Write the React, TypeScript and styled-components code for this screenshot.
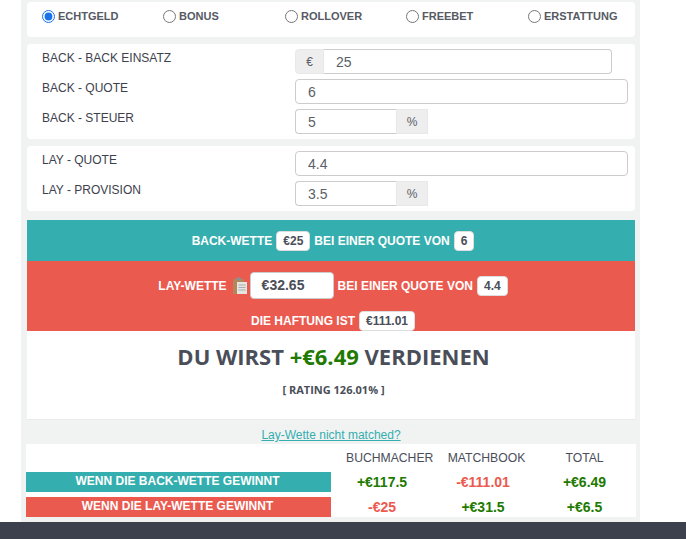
import React from "react";
import styled, { createGlobalStyle } from "styled-components";

const Global = createGlobalStyle`
  html, body { margin: 0; padding: 0; background: #fff; height: 539px; overflow: hidden; }
  #root { height: 539px; }
`;

const Page = styled.div`
  width: 686px;
  height: 539px;
  display: flex;
  flex-direction: column;
  font-family: "Liberation Sans", Arial, sans-serif;
`;

const Panel = styled.main`
  width: 619px;
  height: 522px;
  margin-left: 21px;
  background: #f1f3f3;
  padding: 2px 5px 0 6px;
  box-sizing: border-box;
  display: flex;
  flex-direction: column;
`;

const Footer = styled.footer`
  height: 17px;
  background: #3d414d;
`;

const Card = styled.section<{ $mb: number }>`
  background: #fff;
  border-radius: 4px;
  margin-bottom: ${(p) => p.$mb}px;
`;

const RadioRow = styled(Card)`
  height: 35px;
  box-sizing: border-box;
  padding: 8px 0 0 15px;
  display: grid;
  grid-template-columns: 121px 122px 121px 122px auto;
  align-content: start;
`;

const RadioItem = styled.label`
  display: flex;
  align-items: center;
  gap: 3px;
  font-size: 11px;
  font-weight: 700;
  color: #565a64;
  line-height: 13px;
`;

const RadioInput = styled.input`
  margin: 0;
  width: 13px;
  height: 13px;
  accent-color: #1a73e8;
`;

const FormCard = styled(Card)`
  padding: 5px 0;
  display: flex;
  flex-direction: column;
  gap: 5px;
`;

const Row = styled.div`
  display: grid;
  grid-template-columns: 253px 1fr;
  padding-left: 15px;
  height: 25px;
`;

const Label = styled.div`
  font-size: 12px;
  color: #3d414d;
  line-height: 16px;
  margin-top: 1px;
`;

const Group = styled.div<{ $w: number }>`
  display: flex;
  width: ${(p) => p.$w}px;
  height: 25px;
`;

const Field = styled.input<{ $l?: boolean; $r?: boolean }>`
  flex: 1;
  min-width: 0;
  box-sizing: border-box;
  height: 25px;
  border: 1px solid #ccc;
  border-radius: ${(p) => (p.$l ? "0" : "4px")} ${(p) => (p.$r ? "0 0" : "4px 4px")} ${(p) => (p.$l ? "0" : "4px")};
  ${(p) => (p.$r ? "border-right: 0;" : "")}
  ${(p) => (p.$l ? "border-left: 0;" : "")}
  padding: 0 0 0 12px;
  font-family: "Liberation Sans", Arial, sans-serif;
  font-size: 14px;
  color: #5b5f68;
  background: #fff;
  outline: none;
`;

const Addon = styled.span<{ $w: number; $left?: boolean }>`
  width: ${(p) => p.$w}px;
  box-sizing: border-box;
  display: flex;
  align-items: center;
  justify-content: center;
  background: #eee;
  border: 1px solid #e8e8e8;
  border-radius: ${(p) => (p.$left ? "4px 0 0 4px" : "0")};
  font-size: 12px;
  color: #5b5f68;
`;

const Banner = styled.div<{ $bg: string }>`
  background: ${(p) => p.$bg};
  color: #fff;
  font-size: 12px;
  font-weight: 700;
  display: flex;
  flex-direction: column;
  align-items: center;
  padding-left: 4px;
`;

const Line = styled.div<{ $h: number }>`
  height: ${(p) => p.$h}px;
  display: flex;
  align-items: center;
  justify-content: center;
  gap: 4px;
`;

const Pill = styled.span`
  background: #fff;
  color: #4a4e58;
  font-size: 12px;
  font-weight: 700;
  border: 1px solid #ddd;
  border-radius: 4px;
  padding: 0 6px;
  height: 18px;
  line-height: 18px;
  display: inline-block;
`;

const Amount = styled.span`
  box-sizing: border-box;
  width: 84px;
  height: 27px;
  background: #fff;
  border: 1px solid #ccc;
  border-radius: 4px;
  padding-left: 11px;
  color: #4a4e58;
  font-size: 14px;
  font-weight: 700;
  line-height: 25px;
`;

const Clip = styled.svg`
  width: 16px;
  height: 18px;
  margin-left: 1px;
  margin-right: -2px;
`;

const Result = styled.div`
  background: #fff;
  height: 89px;
  border-bottom: 1px solid #e9ebeb;
  box-sizing: border-box;
  padding-left: 5px;
  text-align: center;
  font-family: "Open Sans", sans-serif;
`;

const Headline = styled.h2`
  margin: 0;
  padding-top: 9px;
  font-size: 22px;
  line-height: 32px;
  font-weight: 700;
  color: #4a4e58;
`;

const Green = styled.span`
  color: #217a00;
`;

const Rating = styled.div`
  margin-top: 11px;
  font-size: 11px;
  line-height: 14px;
  font-weight: 700;
  color: #4a4e58;
`;

const LinkRow = styled.div`
  height: 24px;
  display: flex;
  align-items: center;
  justify-content: center;
  padding-top: 6px;
  box-sizing: border-box;
  font-size: 12px;
`;

const MatchLink = styled.a`
  color: #34aeae;
  text-decoration: underline;
`;

const Table = styled.div`
  margin-left: -1px;
  width: 610px;
  height: 73px;
  background: #fff;
  display: grid;
  grid-template-columns: 305px 102px 100px 103px;
  grid-template-rows: 28px 20px 5px 20px;
  font-size: 12px;
`;

const Head = styled.div<{ $pad?: number }>`
  color: #4a4e58;
  font-size: 12.2px;
  text-align: center;
  line-height: 29px;
  padding-left: ${(p) => p.$pad ?? 0}px;
  white-space: nowrap;
`;

const RowLabel = styled.div<{ $bg: string }>`
  background: ${(p) => p.$bg};
  color: #fff;
  font-weight: 700;
  text-align: center;
  line-height: 18px;
  height: 20px;
  padding-right: 2px;
`;

const Val = styled.div<{ $c: string }>`
  color: ${(p) => p.$c};
  font-size: 14px;
  font-weight: 700;
  text-align: center;
  line-height: 20px;
`;

const Gap = styled.div`
  grid-column: 1 / -1;
`;

const GREEN = "#217a00";
const RED = "#eb5a4f";
const TEAL = "#34aeae";

const radios = ["ECHTGELD", "BONUS", "ROLLOVER", "FREEBET", "ERSTATTUNG"];

export default function App() {
  return (
    <Page>
      <Global />
      <Panel>
        <RadioRow $mb={7}>
          {radios.map((r, i) => (
            <RadioItem key={r}>
              <RadioInput type="radio" name="mode" defaultChecked={i === 0} />
              {r}
            </RadioItem>
          ))}
        </RadioRow>
        <FormCard $mb={7}>
          <Row>
            <Label>BACK - BACK EINSATZ</Label>
            <Group $w={317}>
              <Addon $w={29} $left>€</Addon>
              <Field $l defaultValue="25" />
            </Group>
          </Row>
          <Row>
            <Label>BACK - QUOTE</Label>
            <Group $w={333}>
              <Field defaultValue="6" />
            </Group>
          </Row>
          <Row>
            <Label>BACK - STEUER</Label>
            <Group $w={133}>
              <Field $r defaultValue="5" />
              <Addon $w={32}>%</Addon>
            </Group>
          </Row>
        </FormCard>
        <FormCard $mb={9}>
          <Row>
            <Label>LAY - QUOTE</Label>
            <Group $w={333}>
              <Field defaultValue="4.4" />
            </Group>
          </Row>
          <Row>
            <Label>LAY - PROVISION</Label>
            <Group $w={133}>
              <Field $r defaultValue="3.5" />
              <Addon $w={32}>%</Addon>
            </Group>
          </Row>
        </FormCard>
        <Banner $bg={TEAL}>
          <Line $h={41}>
            BACK-WETTE <Pill>€25</Pill> BEI EINER QUOTE VON <Pill>6</Pill>
          </Line>
        </Banner>
        <Banner $bg={RED}>
          <Line $h={49}>
            LAY-WETTE
            <Clip viewBox="0 0 16 18">
              <rect x="1" y="2" width="11" height="15" rx="1" fill="#b5865a" />
              <rect x="4" y="0.5" width="5" height="3" rx="1" fill="#8f8f8f" />
              <rect x="5" y="5" width="10" height="12" fill="#e4e6e4" />
              <path d="M6.5 8h7M6.5 10.5h7M6.5 13h7" stroke="#a9adab" strokeWidth="1" />
            </Clip>
            <Amount>€32.65</Amount>
            BEI EINER QUOTE VON <Pill>4.4</Pill>
          </Line>
          <Line $h={21}>
            DIE HAFTUNG IST <Pill>€111.01</Pill>
          </Line>
        </Banner>
        <Result>
          <Headline>
            DU WIRST <Green>+€6.49</Green> VERDIENEN
          </Headline>
          <Rating>[ RATING 126.01% ]</Rating>
        </Result>
        <LinkRow>
          <MatchLink href="#">Lay-Wette nicht matched?</MatchLink>
        </LinkRow>
        <Table>
          <Head />
          <Head $pad={15}>BUCHMACHER</Head>
          <Head $pad={7}>MATCHBOOK</Head>
          <Head>TOTAL</Head>
          <RowLabel $bg={TEAL}>WENN DIE BACK-WETTE GEWINNT</RowLabel>
          <Val $c={GREEN}>+€117.5</Val>
          <Val $c={RED}>-€111.01</Val>
          <Val $c={GREEN}>+€6.49</Val>
          <Gap />
          <RowLabel $bg={RED}>WENN DIE LAY-WETTE GEWINNT</RowLabel>
          <Val $c={RED}>-€25</Val>
          <Val $c={GREEN}>+€31.5</Val>
          <Val $c={GREEN}>+€6.5</Val>
        </Table>
      </Panel>
      <Footer />
    </Page>
  );
}
